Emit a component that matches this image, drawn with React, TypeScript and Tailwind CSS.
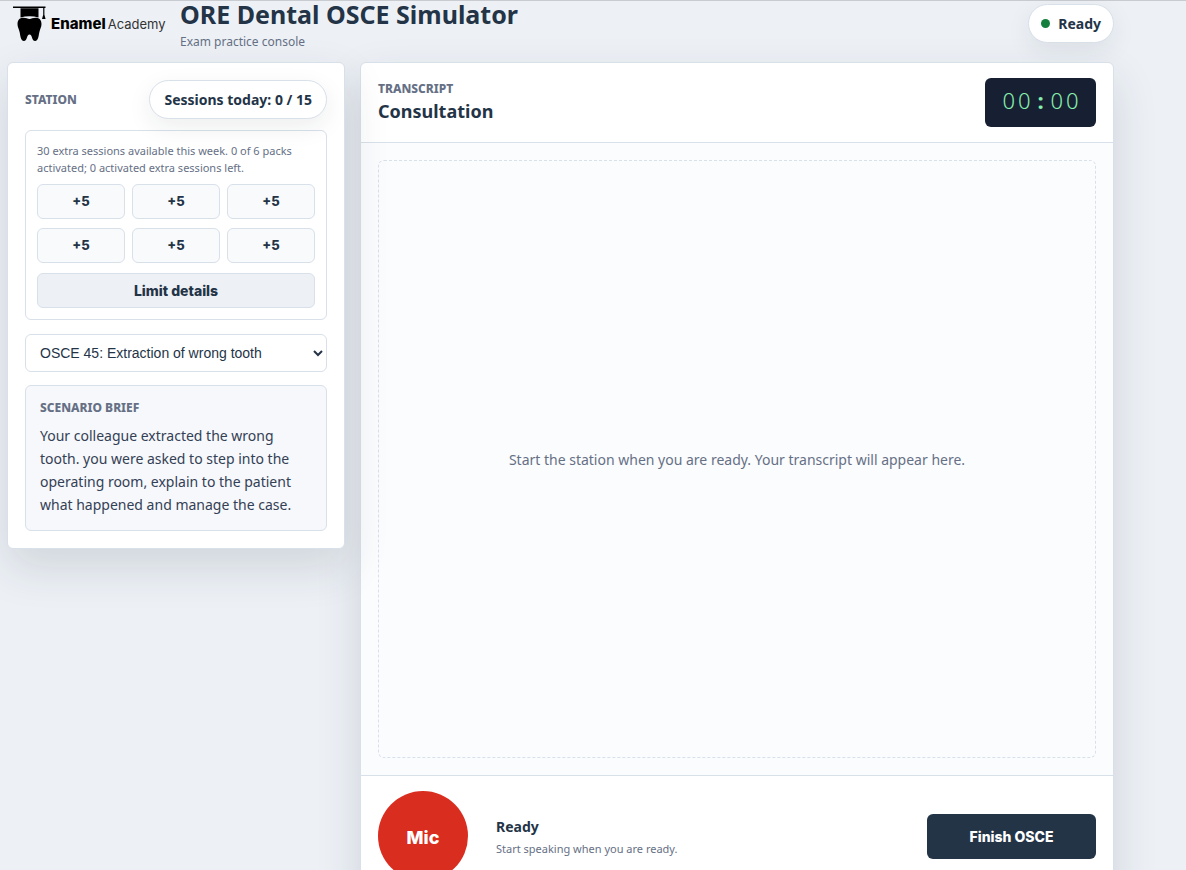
import { clsx } from "clsx";

const PACKS = [1, 2, 3, 4, 5, 6];

const STATIONS = ["OSCE 45: Extraction of wrong tooth"];

const PANEL = "rounded-md border border-[#d8e0ea] bg-white shadow-[0_18px_45px_rgba(31,41,55,0.14)]";
const PILL = "rounded-full border border-[#d8e0ea] bg-white font-bold shadow-[0_8px_24px_rgba(31,41,55,0.08)]";
const BUTTON_FONT = "font-['Inter',sans-serif] font-extrabold";

function Logo() {
  return (
    <a href="#" aria-label="Enamel Academy" className="flex h-[46px] w-[157px] shrink-0 items-center gap-1 pl-1.5 text-black">
      <svg viewBox="0 0 34 36" className="h-9 w-[34px] shrink-0" fill="currentColor" aria-hidden="true">
        <path d="M0 0.5h32.500v1.600h-32.500z" />
        <path d="M7.500 2.200h18v9.200c-5.600-1.700-12.400-1.700-18 0z" />
        <path d="M30.200 1.500h1.200v7.300l1.200 4.200h-3.600l1.200-4.200z" />
        <path d="M10.300 11.700c3 0 4.300 1.200 6.200 1.200s3.200-1.200 6.200-1.200c4 0 5.800 2.700 5.800 6.300 0 3.300-1.500 4.900-2.100 8-.7 3.300-1 9-4.300 9-3.600 0-2.600-6.600-5.600-6.600s-2 6.600-5.600 6.600c-3.300 0-3.600-5.700-4.300-9-.6-3.100-2.100-4.700-2.100-8 0-3.600 1.800-6.300 5.800-6.300z" />
      </svg>
      <span className="flex items-baseline gap-0.5 whitespace-nowrap font-['Inter',sans-serif]">
        <span className="text-[15px] font-extrabold">Enamel</span>
        <span className="text-[13px] text-[#333]">Academy</span>
      </span>
    </a>
  );
}

function Eyebrow({ children }: { children: string }) {
  return <p className="text-[12px] leading-4 font-extrabold text-[#667085] uppercase">{children}</p>;
}

function ExtraSessions() {
  return (
    <div className="mt-[11px] rounded-md border border-[#d8e0ea] px-[11px] pt-[11px] pb-[11px]">
      <p className="text-[11px] leading-[17px] text-[#667085]">
        30 extra sessions available this week. 0 of 6 packs activated; 0 activated extra sessions left.
      </p>
      <div className="mt-2 grid grid-cols-3 gap-x-[7px] gap-y-[9px]">
        {PACKS.map((pack) => (
          <button
            key={pack}
            className={clsx(BUTTON_FONT, "h-[35px] rounded-md border border-[#d8e0ea] bg-[#f8fafc] text-[13px]")}
          >
            +5
          </button>
        ))}
      </div>
      <button
        className={clsx(
          BUTTON_FONT,
          "mt-2.5 h-[35px] w-full rounded-md border border-[#d8e0ea] bg-[#edf1f6] text-[14px]"
        )}
      >
        Limit details
      </button>
    </div>
  );
}

function StationPanel() {
  return (
    <aside className={clsx(PANEL, "relative z-10 p-[17px]")}>
      <div className="flex items-center justify-between">
        <Eyebrow>Station</Eyebrow>
        <span className={clsx(PILL, "px-3.5 py-2 text-[14px] leading-[21px]")}>Sessions today: 0 / 15</span>
      </div>
      <ExtraSessions />
      <select
        aria-label="Station"
        className="mt-3.5 h-[38px] w-full rounded-md border border-[#d8e0ea] bg-white px-2.5 font-['Liberation_Sans',Arial,sans-serif] text-[14px]"
      >
        {STATIONS.map((station) => (
          <option key={station}>{station}</option>
        ))}
      </select>
      <div className="mt-[13px] rounded-md border border-[#d8e0ea] bg-[#f6f8fc] p-3.5">
        <Eyebrow>Scenario brief</Eyebrow>
        <p className="mt-2 text-[14px] leading-[23px] text-[#344054]">
          Your colleague extracted the wrong tooth. you were asked to step into the operating room, explain to the
          patient what happened and manage the case.
        </p>
      </div>
    </aside>
  );
}

function Timer() {
  return (
    <div className="flex h-[49px] w-[111px] items-center justify-center rounded-md bg-[#172033] pb-1 pl-[3px] text-[22px] font-light text-[#86efac]">
      <span className="tracking-[3px]">00</span>
      <span className="w-3.5 text-center font-bold">:</span>
      <span className="pl-[3px] tracking-[3px]">00</span>
    </div>
  );
}

function ConsultationPanel() {
  return (
    <main className={clsx(PANEL, "overflow-hidden")}>
      <div className="flex items-center justify-between border-b border-[#d8e0ea] px-[17px] py-[15px]">
        <div>
          <Eyebrow>Transcript</Eyebrow>
          <h2 className="text-[18px] leading-7 font-bold">Consultation</h2>
        </div>
        <Timer />
      </div>
      <div className="bg-[#fbfcfe] p-[17px]">
        <div className="flex min-h-[598px] items-center justify-center rounded-md border border-dashed border-[#d8e0ea] p-6 text-[14px] text-[#667085]">
          Start the station when you are ready. Your transcript will appear here.
        </div>
      </div>
      <div className="flex items-center border-t border-[#d8e0ea] px-[17px] py-[15px]">
        <button
          className={clsx(BUTTON_FONT, "size-[90px] shrink-0 rounded-full bg-[#d92d20] pt-[3px] text-[18px] text-white")}
        >
          Mic
        </button>
        <div className="ml-7 grow pt-1">
          <p className="text-[14px] leading-[22px] font-bold">Ready</p>
          <p className="text-[11px] leading-[22px] text-[#667085]">Start speaking when you are ready.</p>
        </div>
        <button
          className={clsx(BUTTON_FONT, "h-[45px] w-[169px] rounded-md bg-[#243447] text-[14px] text-white")}
        >
          Finish OSCE
        </button>
      </div>
    </main>
  );
}

export default function App() {
  return (
    <div className="min-h-screen border-t border-[#c8ccd0] bg-[#edf1f6] font-['Noto_Sans',sans-serif] text-[#243447]">
      <div className="max-w-[1114px] pl-[7px]">
        <header className="flex h-[61px] items-start justify-between">
          <div className="flex items-start gap-4">
            <Logo />
            <div>
              <h1 className="text-[25px] leading-[26px] font-bold">ORE Dental OSCE Simulator</h1>
              <p className="text-[12px] leading-[29px] text-[#667085]">Exam practice console</p>
            </div>
          </div>
          <div className={clsx(PILL, "mt-[3px] flex items-center gap-2 px-3 py-2 text-[14px] leading-[21px]")}>
            <span className="size-[9px] rounded-full bg-[#15803d]" />
            Ready
          </div>
        </header>
        <div className="grid grid-cols-[338px_1fr] items-start gap-[15px]">
          <StationPanel />
          <ConsultationPanel />
        </div>
      </div>
    </div>
  );
}
